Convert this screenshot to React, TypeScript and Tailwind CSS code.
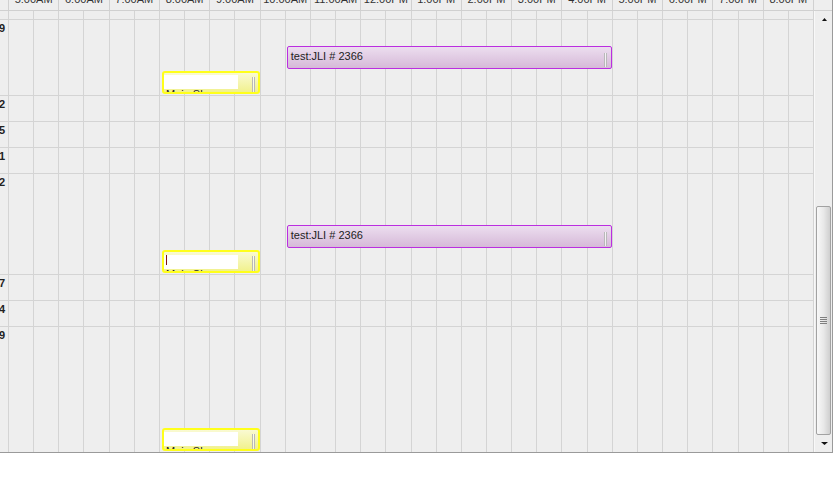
import type { CSSProperties } from "react";

const HOURS = [
  "5:00AM", "6:00AM", "7:00AM", "8:00AM", "9:00AM", "10:00AM", "11:00AM", "12:00PM",
  "1:00PM", "2:00PM", "3:00PM", "4:00PM", "5:00PM", "6:00PM", "7:00PM", "8:00PM",
];

type Booking = { kind: "job" | "note"; lane: number; caret?: boolean };
type Row = { label: string; lanes: number; items: Booking[] };

const ROWS: Row[] = [
  { label: "9", lanes: 3, items: [{ kind: "job", lane: 1 }, { kind: "note", lane: 2 }] },
  { label: "2", lanes: 1, items: [] },
  { label: "5", lanes: 1, items: [] },
  { label: "1", lanes: 1, items: [] },
  { label: "2", lanes: 4, items: [{ kind: "job", lane: 2 }, { kind: "note", lane: 3, caret: true }] },
  { label: "7", lanes: 1, items: [] },
  { label: "4", lanes: 1, items: [] },
  { label: "9", lanes: 5, items: [{ kind: "note", lane: 4 }] },
];

const laneRows: Record<number, string> = {
  1: "grid-rows-[25px]",
  3: "grid-rows-[repeat(3,25px)]",
  4: "grid-rows-[repeat(4,25px)]",
  5: "grid-rows-[repeat(5,25px)]",
};

const COLS = Array.from({ length: 32 }, (_, i) => i);

const Cells = () => (
  <>
    {COLS.map(i => (
      <div key={i} className="row-span-full border-r border-[#d4d4d4]" style={{ gridColumn: i + 1 }} />
    ))}
  </>
);

const Grip = ({ className }: { className: string }) => (
  <div className={`w-[3px] shrink-0 border-x border-[#b9b9b9] bg-white/70 ${className}`} />
);

const Job = ({ lane }: { lane: number }) => {
  const style: CSSProperties = { gridColumn: "12 / 25", gridRow: lane + 1 };
  return (
    <div
      style={style}
      className="my-[1px] ml-[1px] mr-[1px] flex rounded-[2px] border border-[#bb2ee0] bg-linear-to-b from-[#ecdeef] to-[#d6b9d8]"
    >
      <span className="flex-1 pl-[3px] pt-[3px] leading-[13px] whitespace-nowrap text-[#222]">test:JLI # 2366</span>
      <Grip className="mt-[6px] mr-[4px] h-[14px]" />
    </div>
  );
};

const Note = ({ lane, caret }: { lane: number; caret?: boolean }) => {
  const style: CSSProperties = { gridColumn: "7 / 11", gridRow: lane + 1 };
  return (
    <div
      style={style}
      className="my-[1px] ml-[2px] mr-[1px] flex overflow-hidden rounded-[3px] border-2 border-[#ffff1a] bg-linear-to-b from-[#fafad2] to-[#f1f18c]"
    >
      <div className="w-[74px] shrink-0 pt-[2px]">
        <div className="h-[14px] bg-white">
          {caret && <div className="ml-[2px] mt-[1px] h-[10px] w-[1px] bg-[#7d1212]" />}
        </div>
        <div className="pl-[2px] leading-[11px] whitespace-nowrap text-[#222]">Main Shop</div>
      </div>
      <div className="flex-1" />
      <Grip className="mt-[4px] mr-[3px] h-[15px]" />
    </div>
  );
};

const Header = () => (
  <div className="flex h-[11px] shrink-0 overflow-hidden border-b border-[#d0d0d0] text-[#333]">
    <div className="w-[9px] shrink-0 border-r border-[#d0d0d0]" />
    <div className="grid w-[805px] shrink-0 grid-cols-[repeat(16,minmax(0,1fr))]">
      {HOURS.map(h => (
        <div key={h} className="border-r border-[#d0d0d0] text-center whitespace-nowrap leading-[13px]">
          <div className="-mt-[7px]">{h}</div>
        </div>
      ))}
    </div>
    <div className="flex-1" />
  </div>
);

const ScrollBar = () => (
  <div className="flex w-[18px] shrink-0 flex-col border-l border-[#f8f8f8] bg-[#eeeeee]">
    <div className="flex h-[17px] shrink-0 items-center justify-center pl-[1px]">
      <svg width="5" height="3" viewBox="0 0 5 3">
        <path d="M2.5 0 L5 3 L0 3 Z" fill="#111" />
      </svg>
    </div>
    <div className="flex flex-1 flex-col">
      <div className="ml-[1px] mt-[178px] flex h-[229px] w-[15px] items-center justify-center rounded-[2px] border border-[#a2a2a2] bg-linear-to-r from-[#f8f8f8] via-[#e9e9e9] to-[#cfcfcf]">
        <div className="flex w-[7px] flex-col gap-[1px]">
          <div className="h-[1px] bg-[#7f7f7f]" />
          <div className="h-[1px] bg-[#7f7f7f]" />
          <div className="h-[1px] bg-[#7f7f7f]" />
          <div className="h-[1px] bg-[#7f7f7f]" />
        </div>
      </div>
    </div>
    <div className="flex h-[17px] shrink-0 items-center justify-center pl-[1px]">
      <svg width="7" height="3" viewBox="0 0 7 3">
        <path d="M0 0 L7 0 L3.5 3 Z" fill="#111" />
      </svg>
    </div>
  </div>
);

export default function App() {
  return (
    <div className="h-[477px] w-[837px] bg-white font-['Liberation_Sans',Arial,sans-serif] text-[11px]">
      <div className="flex h-[453px] w-[833px] flex-col overflow-hidden border-r border-b border-[#9a9a9a] bg-[#eeeeee]">
        <Header />
        <div className="flex min-h-0 flex-1">
          <div className="flex w-[814px] shrink-0 flex-col overflow-hidden">
            <div className="flex h-[9px] shrink-0 border-b border-[#d4d4d4]">
              <div className="w-[9px] shrink-0 border-r border-[#d4d4d4]" />
              <div className="grid w-[805px] shrink-0 grid-cols-[repeat(32,minmax(0,1fr))] grid-rows-[8px]">
                <Cells />
              </div>
            </div>
            {ROWS.map((row, idx) => (
              <div key={idx} className="flex shrink-0 border-b border-[#d4d4d4]">
                <div className="flex w-[9px] shrink-0 justify-end overflow-hidden border-r border-[#d4d4d4] pr-[3px] pt-[2px] font-bold leading-[13px] text-[#222]">
                  <span className="whitespace-nowrap">{row.label}</span>
                </div>
                <div className={`grid w-[805px] shrink-0 grid-cols-[repeat(32,minmax(0,1fr))] ${laneRows[row.lanes]}`}>
                  <Cells />
                  {row.items.map((b, i) =>
                    b.kind === "job" ? <Job key={i} lane={b.lane} /> : <Note key={i} lane={b.lane} caret={b.caret} />
                  )}
                </div>
              </div>
            ))}
          </div>
          <ScrollBar />
        </div>
      </div>
    </div>
  );
}
